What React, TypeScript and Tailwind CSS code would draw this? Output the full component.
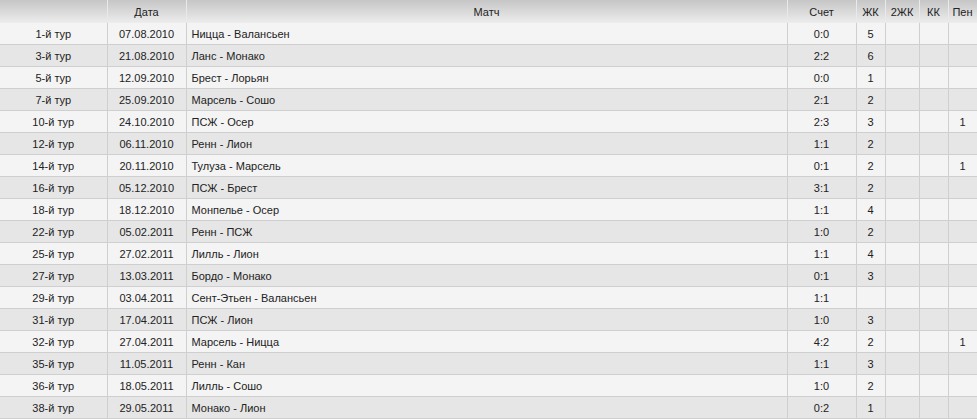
import React from "react";

type Match = {
  round: string;
  date: string;
  teams: string;
  score: string;
  yc: string;
  yc2: string;
  rc: string;
  pen: string;
};

const matches: Match[] = [
  { round: "1-й тур", date: "07.08.2010", teams: "Ницца - Валансьен", score: "0:0", yc: "5", yc2: "", rc: "", pen: "" },
  { round: "3-й тур", date: "21.08.2010", teams: "Ланс - Монако", score: "2:2", yc: "6", yc2: "", rc: "", pen: "" },
  { round: "5-й тур", date: "12.09.2010", teams: "Брест - Лорьян", score: "0:0", yc: "1", yc2: "", rc: "", pen: "" },
  { round: "7-й тур", date: "25.09.2010", teams: "Марсель - Сошо", score: "2:1", yc: "2", yc2: "", rc: "", pen: "" },
  { round: "10-й тур", date: "24.10.2010", teams: "ПСЖ - Осер", score: "2:3", yc: "3", yc2: "", rc: "", pen: "1" },
  { round: "12-й тур", date: "06.11.2010", teams: "Ренн - Лион", score: "1:1", yc: "2", yc2: "", rc: "", pen: "" },
  { round: "14-й тур", date: "20.11.2010", teams: "Тулуза - Марсель", score: "0:1", yc: "2", yc2: "", rc: "", pen: "1" },
  { round: "16-й тур", date: "05.12.2010", teams: "ПСЖ - Брест", score: "3:1", yc: "2", yc2: "", rc: "", pen: "" },
  { round: "18-й тур", date: "18.12.2010", teams: "Монпелье - Осер", score: "1:1", yc: "4", yc2: "", rc: "", pen: "" },
  { round: "22-й тур", date: "05.02.2011", teams: "Ренн - ПСЖ", score: "1:0", yc: "2", yc2: "", rc: "", pen: "" },
  { round: "25-й тур", date: "27.02.2011", teams: "Лилль - Лион", score: "1:1", yc: "4", yc2: "", rc: "", pen: "" },
  { round: "27-й тур", date: "13.03.2011", teams: "Бордо - Монако", score: "0:1", yc: "3", yc2: "", rc: "", pen: "" },
  { round: "29-й тур", date: "03.04.2011", teams: "Сент-Этьен - Валансьен", score: "1:1", yc: "", yc2: "", rc: "", pen: "" },
  { round: "31-й тур", date: "17.04.2011", teams: "ПСЖ - Лион", score: "1:0", yc: "3", yc2: "", rc: "", pen: "" },
  { round: "32-й тур", date: "27.04.2011", teams: "Марсель - Ницца", score: "4:2", yc: "2", yc2: "", rc: "", pen: "1" },
  { round: "35-й тур", date: "11.05.2011", teams: "Ренн - Кан", score: "1:1", yc: "3", yc2: "", rc: "", pen: "" },
  { round: "36-й тур", date: "18.05.2011", teams: "Лилль - Сошо", score: "1:0", yc: "2", yc2: "", rc: "", pen: "" },
  { round: "38-й тур", date: "29.05.2011", teams: "Монако - Лион", score: "0:2", yc: "1", yc2: "", rc: "", pen: "" },
];

const cell = "h-[21px] p-0 pt-px border-b border-r border-[#cfcfcf] leading-[20px]";
const head = "h-[23px] p-0 pt-px border-r border-[#e9e9e9] font-normal leading-[22px]";

export default function App() {
  return (
    <div className="w-[977px] bg-white font-['Liberation_Sans',Arial,sans-serif] text-[11px] text-[#222]">
      <table className="w-[977px] table-fixed border-collapse">
        <colgroup>
          <col className="w-[107px]" />
          <col className="w-[79px]" />
          <col className="w-[601px]" />
          <col className="w-[69px]" />
          <col className="w-[29px]" />
          <col className="w-[34px]" />
          <col className="w-[29px]" />
          <col className="w-[29px]" />
        </colgroup>
        {/* Header */}
        <thead>
          <tr className="bg-gradient-to-b from-[#c6c6c6] to-[#ededed]">
            <th className={head} />
            <th className={head}>Дата</th>
            <th className={head}>Матч</th>
            <th className={head}>Счет</th>
            <th className={head}>ЖК</th>
            <th className={head}>2ЖК</th>
            <th className={head}>КК</th>
            <th className={head}>Пен</th>
          </tr>
        </thead>
        <tbody>
          {matches.map((m, i) => (
            <tr key={m.round} className={i % 2 === 0 ? "bg-[#f4f4f4]" : "bg-[#e6e6e6]"}>
              <td className={`${cell} text-center`}>{m.round}</td>
              <td className={`${cell} text-center`}>{m.date}</td>
              <td className={`${cell} pl-[5px] text-left`}>{m.teams}</td>
              <td className={`${cell} text-center`}>{m.score}</td>
              <td className={`${cell} text-center`}>{m.yc}</td>
              <td className={`${cell} text-center`}>{m.yc2}</td>
              <td className={`${cell} text-center`}>{m.rc}</td>
              <td className={`${cell} text-center`}>{m.pen}</td>
            </tr>
          ))}
        </tbody>
      </table>
    </div>
  );
}
